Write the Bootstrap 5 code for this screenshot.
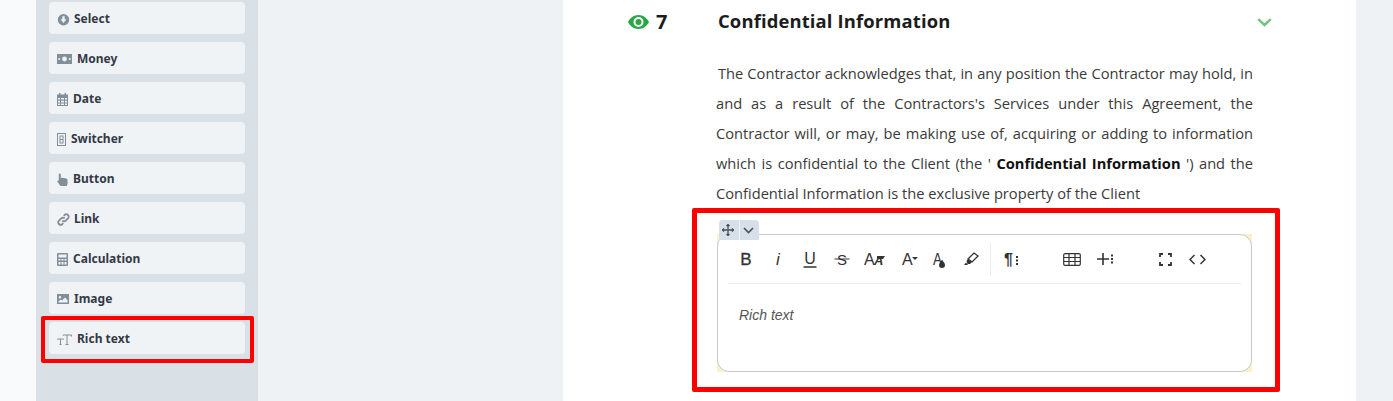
<!DOCTYPE html>
<html lang="en">
<head>
    <meta charset="UTF-8">
    <meta name="viewport" content="width=device-width, initial-scale=1.0">
    <title>Confidential Information</title>
    <link href="https://cdn.jsdelivr.net/npm/bootstrap@5.3.0/dist/css/bootstrap.min.css" rel="stylesheet">
    <style>
        html, body { height: 401px; overflow: hidden; }
        body { background: #f9fafc; font-family: "Open Sans", sans-serif; color: #333; }
        .page-wrap { height: 401px; padding-left: 36px; }
        .side-col { width: 222px; flex: none; background: #d9e0e6; padding: 2px 13px 0; position: relative; }
        .main-col { flex: 1; background: #eff2f5; padding-left: 305px; padding-right: 37px; }
        .sheet { background: #fff; height: 401px; position: relative; padding: 0 85px 0 65px; }
        .field-item { height: 32px; background: #f0f3f6; border-radius: 4px; margin-bottom: 8px; padding: 2px 0 0 8px; color: #343a46; font-family: "Noto Sans", sans-serif; font-size: 12px; font-weight: 700; }
        .field-item svg { fill: #828e98; flex: none; margin-right: 4px; }
        .red-frame { position: absolute; border-style: solid; border-color: #fe0000; border-radius: 2px; pointer-events: none; }
        .frame-left { left: 5px; top: 316px; width: 213px; height: 47px; border-width: 4px; }
        .frame-right { left: 129px; top: 208px; width: 588px; height: 184px; border-width: 5px; }
        .sec-head { height: 43px; color: #1c1c1c; }
        .sec-num { width: 90px; font-size: 20px; font-weight: 700; flex: none; }
        .sec-num svg { margin-right: 7px; margin-top: 1px; }
        .sec-title { font-size: 18.4px; font-weight: 700; flex: 1; letter-spacing: .15px; margin-bottom: 2px; }
        .sec-chevron { margin-top: 2px; margin-right: -1px; }
        .sec-body { font-size: 14.67px; line-height: 30px; text-align: justify; color: #3a3a3a; margin: 15px 0 0 88px; text-indent: 2px; width: 537px; }
        .sec-body b { color: #111; }
        .editor-box { position: absolute; left: 154px; top: 234px; width: 535px; height: 138px; background: #fdf0cf; }
        .editor-inner { height: 100%; border: 1px solid #c9c9c9; border-radius: 12px; background: #fff; }
        .editor-handle { position: absolute; left: 156px; top: 220px; width: 40px; height: 20px; background: #d7e0e8; border-radius: 4px 4px 0 0; z-index: 2; }
        .editor-handle span { width: 20px; padding-right: 2px; }
        .editor-handle span + span { border-left: 1px solid #eef2f5; }
        .tool-row { height: 49px; margin: 0 10px; padding: 0 0 0 2px; border-bottom: 1px solid #ececec; }
        .tool-btn { width: 32px; height: 32px; flex: none; }
        .tool-btn text { font-family: "Liberation Sans", sans-serif; fill: #333; }
        .tool-sep { width: 1px; height: 33px; background: #ececec; margin: 0 4px; flex: none; }
        .tool-gap { width: 29px; flex: none; }
        .editor-text { font-family: "Liberation Sans", sans-serif; font-style: italic; font-size: 14px; color: #555; padding: 21px 0 0 21px; }
    </style>
</head>
<body>
    <div class="page-wrap d-flex">
        <div class="side-col">
            <div class="field-item d-flex align-items-center">
                <svg width="13" height="13" viewBox="0 0 13 13"><path fill-rule="evenodd" d="M6.500 1a5.700 5.700 0 1 0 0 11.400A5.700 5.700 0 0 0 6.500 1zM5.300 3.200h2.400v3h1.800L6.500 10 3.500 6.200h1.800z"/></svg>
                Select
            </div>
            <div class="field-item d-flex align-items-center">
                <svg width="15" height="10" viewBox="0 0 15 10" style="margin-right:5px"><path fill-rule="evenodd" d="M0 0h15v10H0zM7.500 2.600a2.400 2.400 0 1 0 0 4.800 2.400 2.400 0 0 0 0-4.800zM2.200 4a1 1 0 1 0 0 2 1 1 0 0 0 0-2zm10.600 0a1 1 0 1 0 0 2 1 1 0 0 0 0-2z"/></svg>
                Money
            </div>
            <div class="field-item d-flex align-items-center">
                <svg width="11" height="13" viewBox="0 0 11 13" style="margin-right:5px"><path fill-rule="evenodd" d="M2 0h1.500v1.500h4V0H9v1.500h2V13H0V1.500h2zM1 5v1.600h2V5zm3 0v1.600h3V5zm4 0v1.600h2V5zM1 7.800v1.600h2V7.800zm3 0v1.600h3V7.800zm4 0v1.600h2V7.800zM1 10.400V12h2v-1.600zm3 0V12h3v-1.600zm4 0V12h2v-1.600z"/></svg>
                Date
            </div>
            <div class="field-item d-flex align-items-center">
                <svg width="9" height="13" viewBox="0 0 9 13" style="margin-right:5px"><path fill-rule="evenodd" d="M0 0h9v13H0zm1 1v11h7V1zm1.500 1.500h4v8h-4zm1 1v2.500h2V3.500zm0 3.500v2.500h2V7z"/></svg>
                Switcher
            </div>
            <div class="field-item d-flex align-items-center">
                <svg width="11" height="13" viewBox="0 0 11 13" style="margin-right:5px"><path d="M2.800.5c.6 0 1 .4 1 1V5c.9-.3 1.800-.3 2.500 0 .9-.2 1.700 0 2.300.4.900 0 1.900.4 1.900 1.600v3.500L9.800 13H3.500L.4 8.800c-.5-.9.400-1.800 1.400-1.200V1.500c0-.6.400-1 1-1z"/></svg>
                Button
            </div>
            <div class="field-item d-flex align-items-center">
                <svg width="13" height="13" viewBox="0 0 13 13" style="fill:none;stroke:#828e98;stroke-width:1.800"><path d="M5.300 7.700a2.400 2.400 0 0 0 3.400 0l2.300-2.300a2.400 2.400 0 0 0-3.400-3.400L6.800 3M7.700 5.300a2.400 2.400 0 0 0-3.400 0L2 7.600A2.400 2.400 0 0 0 5.400 11l.8-1"/></svg>
                Link
            </div>
            <div class="field-item d-flex align-items-center">
                <svg width="11" height="13" viewBox="0 0 11 13" style="margin-right:5px"><path fill-rule="evenodd" d="M1 0h9a1 1 0 0 1 1 1v11a1 1 0 0 1-1 1H1a1 1 0 0 1-1-1V1a1 1 0 0 1 1-1zm.5 1.500v3h8v-3zM1.500 6v1.500h2V6zm3 0v1.500h2V6zm3 0v1.500h2V6zm-6 3v2.500h2V9zm3 0v2.500h2V9zm3 0v2.500h2V9z"/></svg>
                Calculation
            </div>
            <div class="field-item d-flex align-items-center">
                <svg width="12" height="10" viewBox="0 0 12 10" style="margin-right:5px"><path fill-rule="evenodd" d="M0 0h12v10H0zM3 2a1.200 1.200 0 1 0 0 2.400A1.200 1.200 0 0 0 3 2zM1.500 8.500h9V6L8 3.500 5 6.500 3.800 5.500 1.500 7.500z"/></svg>
                Image
            </div>
            <div class="field-item d-flex align-items-center">
                <svg width="15" height="11" viewBox="0 0 15 11" style="fill:none;stroke:#828e98;stroke-width:1;margin-right:5px"><path d="M6 1.500V1h8.500v1.500M10 1v9.500M8.500 10.500H11.500M.5 5.500V5h6v.5M3.500 5v5.500M2.500 10.500h2"/></svg>
                Rich text
            </div>
            <div class="red-frame frame-left"></div>
        </div>
        <div class="main-col">
            <div class="sheet">
                <div class="sec-head d-flex align-items-center">
                    <div class="sec-num d-flex align-items-center">
                        <svg width="21" height="14" viewBox="0 0 21 14"><path fill="#28a745" fill-rule="evenodd" d="M10.500 0C15 0 19 2.800 21 7c-2 4.200-6 7-10.500 7S2 11.200 0 7c2-4.200 6-7 10.500-7zm0 2a5 5 0 1 0 0 10 5 5 0 0 0 0-10zm0 2a3 3 0 1 1 0 6 3 3 0 0 1 0-6z"/></svg>
                        <span>7</span>
                    </div>
                    <div class="sec-title">Confidential Information</div>
                    <svg class="sec-chevron" width="15" height="9" viewBox="0 0 15 9"><path d="M1.200 1.200 7.500 7l6.300-5.800" fill="none" stroke="#72c47f" stroke-width="2.400"/></svg>
                </div>
                <p class="sec-body">The Contractor acknowledges that, in any position the Contractor may hold, in and as a result of the Contractors's Services under this Agreement, the Contractor will, or may, be making use of, acquiring or adding to information which is confidential to the Client (the ' <b>Confidential Information</b> ') and the Confidential Information is the exclusive property of the Client</p>

                <div class="editor-handle d-flex">
                    <span class="d-flex align-items-center justify-content-center">
                        <svg width="12" height="12" viewBox="0 0 12 12"><path d="M6 .5v11M.5 6h11M4.500 2 6 .5 7.500 2M4.500 10 6 11.500 7.500 10M2 4.500.5 6 2 7.500M10 4.500 11.500 6 10 7.500" fill="none" stroke="#46525c" stroke-width="1.300"/></svg>
                    </span>
                    <span class="d-flex align-items-center justify-content-center">
                        <svg width="11" height="7" viewBox="0 0 11 7"><path d="M1 1l4.500 4.500L10 1" fill="none" stroke="#46525c" stroke-width="1.600"/></svg>
                    </span>
                </div>
                <div class="editor-box">
                    <div class="editor-inner">
                        <div class="tool-row d-flex align-items-center">
                            <span class="tool-btn d-flex align-items-center justify-content-center"><svg width="20" height="20" viewBox="0 0 20 20"><text x="10" y="16" font-size="17" text-anchor="middle" stroke="#333" stroke-width=".3">B</text></svg></span>
                            <span class="tool-btn d-flex align-items-center justify-content-center"><svg width="20" height="20" viewBox="0 0 20 20"><text x="10" y="16" font-size="17" font-style="italic" text-anchor="middle">i</text></svg></span>
                            <span class="tool-btn d-flex align-items-center justify-content-center"><svg width="20" height="20" viewBox="0 0 20 20"><text x="10" y="15" font-size="16" text-anchor="middle">U</text><path d="M3.500 18h13" stroke="#333" stroke-width="1.500"/></svg></span>
                            <span class="tool-btn d-flex align-items-center justify-content-center"><svg width="20" height="20" viewBox="0 0 20 20"><text x="10" y="16" font-size="15" text-anchor="middle">S</text><path d="M2.500 10h15" stroke="#333" stroke-width="1"/></svg></span>
                            <span class="tool-btn d-flex align-items-center justify-content-center"><svg width="24" height="20" viewBox="0 0 24 20"><text x="2" y="16" font-size="16">A</text><text x="12" y="16" font-size="13" font-style="italic" font-weight="700">A</text><path d="M15 7h8l-2 3h-6z" fill="#333"/></svg></span>
                            <span class="tool-btn d-flex align-items-center justify-content-center"><svg width="24" height="20" viewBox="0 0 24 20"><text x="8" y="16" font-size="16">A</text><path d="M18 8h6l-3 3z" fill="#333"/></svg></span>
                            <span class="tool-btn d-flex align-items-center justify-content-center"><svg width="20" height="20" viewBox="0 0 20 20"><text x="5" y="16" font-size="16" textLength="9" lengthAdjust="spacingAndGlyphs">A</text><path d="M14 10.500c1 2 3 3.500 3 5.500a3 3 0 0 1-6 0c0-2 2-3.500 3-5.500z" fill="#333"/></svg></span>
                            <span class="tool-btn d-flex align-items-center justify-content-center"><svg width="18" height="16" viewBox="0 0 18 16"><path d="M13 2l4 3-6 6-4-3z" fill="none" stroke="#333" stroke-width="1.300"/><path d="M7 8l4 3-2 2H6.500L5.500 10zM3 14l2-2.500 2 2.500z" fill="#333"/></svg></span>
                            <span class="tool-sep"></span>
                            <span class="tool-btn d-flex align-items-center justify-content-center"><svg width="18" height="16" viewBox="0 0 18 16"><text x="2" y="14" font-size="16" font-weight="700">¶</text><path d="M14 6h2M14 9.500h2M14 13h2" stroke="#333" stroke-width="2"/></svg></span>
                            <span class="tool-gap"></span>
                            <span class="tool-btn d-flex align-items-center justify-content-center"><svg width="18" height="13" viewBox="0 0 18 13"><path d="M2 .7h14A1.300 1.300 0 0 1 17.300 2v9a1.300 1.300 0 0 1-1.300 1.300H2A1.300 1.300 0 0 1 .7 11V2A1.300 1.300 0 0 1 2 .7zM.7 4.500h16.600M.7 8.500h16.600M6 .7v11.600M12 .7v11.600" fill="none" stroke="#333" stroke-width="1.200"/></svg></span>
                            <span class="tool-btn d-flex align-items-center justify-content-center"><svg width="18" height="14" viewBox="0 0 18 14"><path d="M2 7h12M8 1v12" stroke="#333" stroke-width="1.600"/><path d="M16 3.500h2M16 7h2M16 10.500h2" stroke="#333" stroke-width="2"/></svg></span>
                            <span class="tool-gap"></span>
                            <span class="tool-btn d-flex align-items-center justify-content-center"><svg width="13" height="13" viewBox="0 0 13 13"><path d="M1 4V1h3M9 1h3v3M12 9v3H9M4 12H1V9" fill="none" stroke="#333" stroke-width="1.800"/></svg></span>
                            <span class="tool-btn d-flex align-items-center justify-content-center"><svg width="17" height="11" viewBox="0 0 17 11"><path d="M5.500 1 1 5.500 5.500 10M11.500 1 16 5.500 11.500 10" fill="none" stroke="#333" stroke-width="1.500"/></svg></span>
                        </div>
                        <div class="editor-text">Rich text</div>
                    </div>
                </div>
                <div class="red-frame frame-right"></div>
            </div>
        </div>
    </div>
    <script src="https://cdn.jsdelivr.net/npm/bootstrap@5.3.0/dist/js/bootstrap.bundle.min.js"></script>
</body>
</html>
